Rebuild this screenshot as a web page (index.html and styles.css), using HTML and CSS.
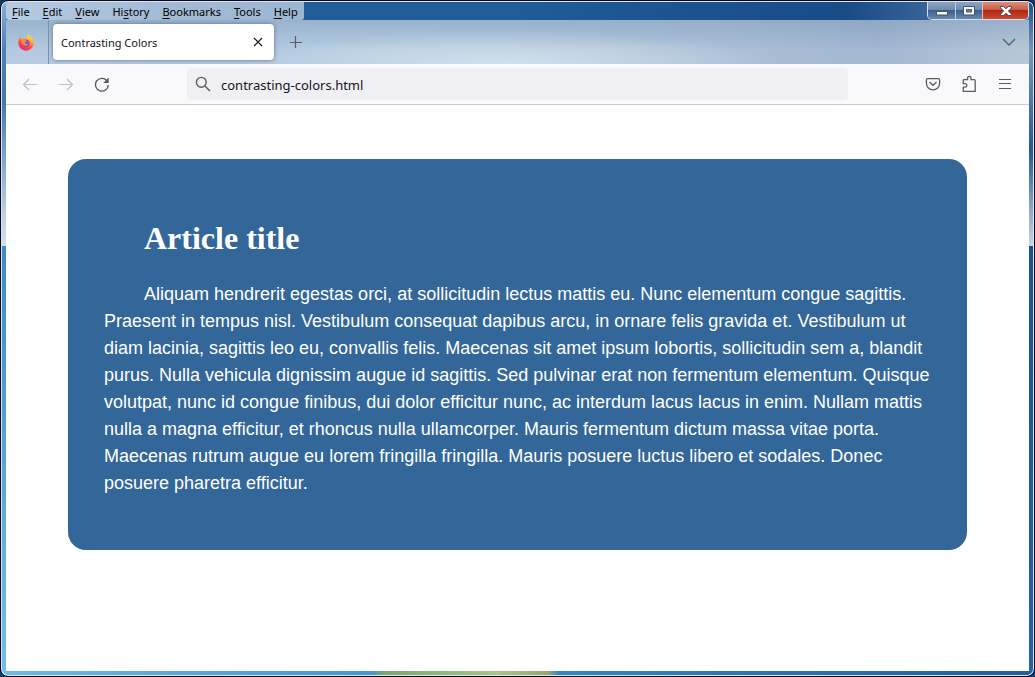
FILE: index.html
```html
<!DOCTYPE html>
<html lang="en">
<head>
<meta charset="utf-8">
<title>Contrasting Colors</title>
<link rel="stylesheet" href="styles.css">
</head>
<body>
<div class="window">
  <header class="titlebar">
    <nav class="menu" aria-label="Menu bar">
      <button type="button"><u>F</u>ile</button>
      <button type="button"><u>E</u>dit</button>
      <button type="button"><u>V</u>iew</button>
      <button type="button">Hi<u>s</u>tory</button>
      <button type="button"><u>B</u>ookmarks</button>
      <button type="button"><u>T</u>ools</button>
      <button type="button"><u>H</u>elp</button>
    </nav>
    <div class="controls">
      <button type="button" class="minimize" aria-label="Minimize"><svg width="12" height="12" viewBox="0 0 12 12"><path d="M.5 6.500h11v3.500H.5z" fill="#fff" stroke="#465469"/></svg></button>
      <button type="button" class="maximize" aria-label="Maximize"><svg width="12" height="10" viewBox="0 0 12 10"><path d="M.5.5h11v8.500H.5z" fill="#f8f8fa" stroke="#465469"/><path d="M3.500 3.500h5v2.500h-5z" fill="#6f88a7" stroke="#465469"/></svg></button>
      <button type="button" class="close" aria-label="Close"><svg width="12" height="10" viewBox="0 0 12 10"><path d="M.5.5h3.200L6 2.800 8.300.5h3.200v1.300L8.400 5l3.100 3.200v1.300H8.300L6 7.200 3.700 9.500H.5V8.200L3.600 5 .5 1.800z" fill="#fff" stroke="#584950"/></svg></button>
    </div>
  </header>
  <div class="tabs">
    <button type="button" class="pinned" aria-label="Firefox View">
      <svg width="16" height="17" viewBox="0 0 16 17">
        <defs>
          <linearGradient id="flame" x1=".8" y1="0" x2=".3" y2="1"><stop offset="0" stop-color="#fff044"/><stop offset=".35" stop-color="#ffae25"/><stop offset=".65" stop-color="#ff4b3d"/><stop offset="1" stop-color="#e5248c"/></linearGradient>
          <linearGradient id="globe" x1="1" y1="0" x2="0" y2="1"><stop offset="0" stop-color="#a44cf1"/><stop offset="1" stop-color="#4743c9"/></linearGradient>
        </defs>
        <path d="M10.500 0c.3 1.700 1.300 2.500 2.500 3.700.2-.2.2-.8.1-1.200 1.500 1.400 2.600 3.900 2.600 6.300A7.700 7.700 0 0 1 .3 9.200c0-2.500.7-4.700 2-6.100.1.700.4 1.200.8 1.600 1-.2 2-.1 2.800.3C7 4.200 8.500 3.700 9 3.400c.1-1.400.6-2.500 1.500-3.400z" fill="url(#flame)"/>
        <circle cx="8" cy="9" r="3.600" fill="url(#globe)"/>
        <path d="M3 5.500c1.500-.7 2.900-.2 3.800.8L9 6.700c-.2 1-1.300 1.100-1.900 1.500-.5.500-.1 1.600 1 1.800 1.200.2 1.600-.5 2.600-.4-.8 1.900-3.300 2.700-5.200 1.400C3.600 9.800 3.100 7.500 3 5.500z" fill="#ff9128"/>
      </svg>
    </button>
    <div class="tab">
      <span>Contrasting Colors</span>
      <button type="button" aria-label="Close tab"><svg width="10" height="10" viewBox="0 0 10 10"><path d="m1 1 8 8m0-8L1 9" stroke="#15141a" stroke-width="1.100"/></svg></button>
    </div>
    <button type="button" class="icon newtab" aria-label="New tab"><svg width="12" height="12" viewBox="0 0 12 12"><path d="M5.500 0v12M0 6.500h12" stroke="#5b5b66" stroke-width="1.200"/></svg></button>
    <button type="button" class="icon alltabs" aria-label="List all tabs"><svg width="14" height="8" viewBox="0 0 14 8"><path d="m1 1 6 6 6-6" fill="none" stroke="#5b5b66" stroke-width="1.300"/></svg></button>
  </div>
  <div class="toolbar">
    <div class="history">
      <button type="button" class="icon" aria-label="Back" disabled><svg width="16" height="16" viewBox="0 0 16 16"><path d="M15 8.500H1.500M7 3 1.500 8.500 7 14" fill="none" stroke="#bfbfc5" stroke-width="1.200"/></svg></button>
      <button type="button" class="icon" aria-label="Forward" disabled><svg width="16" height="16" viewBox="0 0 16 16"><path d="M1 8.500h13.500M9 3l5.500 5.500L9 14" fill="none" stroke="#bfbfc5" stroke-width="1.200"/></svg></button>
      <button type="button" class="icon" aria-label="Reload"><svg width="16" height="16" viewBox="0 0 16 16"><path d="M14.300 9A6.400 6.400 0 1 1 12.700 4.500" fill="none" stroke="#5b5b66" stroke-width="1.400"/><path d="M14.700 1.500V7H9.200z" fill="#5b5b66"/></svg></button>
    </div>
    <label class="address">
      <svg width="16" height="16" viewBox="0 0 16 16"><circle cx="6.300" cy="6.300" r="4.900" fill="none" stroke="#5b5b66" stroke-width="1.400"/><path d="m10 10 5 5" stroke="#5b5b66" stroke-width="1.500"/></svg>
      <input type="text" value="contrasting-colors.html" aria-label="Address">
    </label>
    <div class="actions">
      <button type="button" class="icon" aria-label="Save to Pocket"><svg width="16" height="16" viewBox="0 0 16 16"><path d="M2.700 2.600h10.600a1.300 1.300 0 0 1 1.300 1.300v3.400a6.600 6.600 0 0 1-13.200 0V3.900a1.300 1.300 0 0 1 1.300-1.300zM4.500 6 8 9.300 11.500 6" fill="none" stroke="#5b5b66" stroke-width="1.300"/></svg></button>
      <button type="button" class="icon" aria-label="Extensions"><svg width="16" height="18" viewBox="0 0 16 18"><path d="M2.300 16.300v-4.200h1.800a1.700 1.700 0 0 0 0-3.500H2.300V5.500q0-.8.8-.8h3.500V3a1.700 1.700 0 0 1 3.400 0v1.700h3.300q.9 0 .9.900v10.700z" fill="none" stroke="#5b5b66" stroke-width="1.300"/></svg></button>
      <button type="button" class="icon" aria-label="Open menu"><svg width="12" height="12" viewBox="0 0 12 12"><path d="M0 1.500h12M0 5.500h12M0 10.500h12" stroke="#5b5b66" stroke-width="1.200"/></svg></button>
    </div>
  </div>
  <main class="page">
    <article class="card">
      <h1>Article title</h1>
      <p>Aliquam hendrerit egestas orci, at sollicitudin lectus mattis eu. Nunc elementum congue sagittis. Praesent in tempus nisl. Vestibulum consequat dapibus arcu, in ornare felis gravida et. Vestibulum ut diam lacinia, sagittis leo eu, convallis felis. Maecenas sit amet ipsum lobortis, sollicitudin sem a, blandit purus. Nulla vehicula dignissim augue id sagittis. Sed pulvinar erat non fermentum elementum. Quisque volutpat, nunc id congue finibus, dui dolor efficitur nunc, ac interdum lacus lacus in enim. Nullam mattis nulla a magna efficitur, et rhoncus nulla ullamcorper. Mauris fermentum dictum massa vitae porta. Maecenas rutrum augue eu lorem fringilla fringilla. Mauris posuere luctus libero et sodales. Donec posuere pharetra efficitur.</p>
    </article>
  </main>
</div>
</body>
</html>
```
FILE: styles.css
```css
* {
  box-sizing: border-box;
}

body {
  margin: 0;
  background: #123a66;
  font: 11px "Segoe UI", "Noto Sans", sans-serif;
  color: #15141a;
}

button {
  margin: 0;
  padding: 0;
  border: 0;
  background: none;
  color: inherit;
  font: inherit;
}

svg {
  display: block;
}

.window {
  display: flex;
  flex-direction: column;
  min-height: 100vh;
  padding: 1px 5px 5px;
  border: 1px solid #04091c;
  border-radius: 8px;
  box-shadow: inset 0 0 0 1px #dbe8f4;
  background:
    linear-gradient(#8cafd0, #4d7fb4 50px, #4478ae 100px, #b9cee3 210px, #d3e1ef) left top / 50% 245px no-repeat,
    linear-gradient(#174f8c, #7797bb 50px, #4d78a8 100px, #25598f 150px, #7797bb 195px, #c9d6e4) right top / 50% 245px no-repeat,
    linear-gradient(90deg, transparent 36%, #78a870 37%, #a8c684 48%, #98a76a 53%, transparent 54%) left bottom / 100% 5px no-repeat,
    linear-gradient(#3c8bc4, #74bfe9) left bottom / 5px 430px no-repeat,
    linear-gradient(#1a5490, #2463a5) right bottom / 5px 430px no-repeat,
    linear-gradient(90deg, #6bbbe6, #3188c8 52%, #1f5fa2);
}

.titlebar {
  display: flex;
  justify-content: space-between;
  align-items: flex-start;
  height: 18px;
  background: linear-gradient(90deg, #225d99, #1f5c98 50%, #194b87 82%, #5c7fab);
}

.menu {
  display: flex;
  gap: 13px;
  height: 18px;
  padding: 0 6px;
  border-radius: 0 0 3px 3px;
  background: linear-gradient(90deg, #b5cbe2, #a3bbd5 50%, #9cb6d1);
  color: #000;
  line-height: 17px;
}

.menu u {
  text-underline-offset: 2px;
}

.controls {
  display: flex;
  height: 18px;
  border: 1px solid #d5dfeb;
  border-top: 0;
  border-radius: 0 0 5px 5px;
  overflow: hidden;
}

.controls button {
  display: grid;
  place-items: center;
  width: 27px;
  background: linear-gradient(#8ca4c1, #6f8cb0 45%, #3b608f 50%, #6788b1);
}

.controls .maximize {
  border-left: 1px solid #c0cede;
}

.controls .close {
  width: 46px;
  border-left: 1px solid #efb8aa;
  background: linear-gradient(#d9917f, #ca5c45 45%, #ae2717 50%, #cc4b2d);
}

.tabs {
  display: flex;
  align-items: center;
  height: 44px;
  background:
    radial-gradient(ellipse 260px 34px at 49% 100%, rgba(225, 235, 244, .7), transparent),
    linear-gradient(rgba(120, 150, 185, .45), transparent 70%),
    linear-gradient(90deg, #b5cae0, #b3cbe0 40%, #adc0d7 70%, #a2b7d1 85%, #b8c8d9);
}

.pinned {
  display: grid;
  place-items: center;
  align-self: stretch;
  width: 43px;
  padding-right: 3px;
  border-right: 1px solid #7f91a6;
}

.tab {
  display: flex;
  align-items: center;
  justify-content: space-between;
  width: 221px;
  height: 36px;
  margin-left: 4px;
  padding: 0 11px 0 8px;
  border-radius: 4px;
  background: #fff;
  box-shadow: 0 0 4px rgba(40, 60, 90, .6);
}

.icon {
  display: grid;
  place-items: center;
  width: 36px;
  height: 32px;
}

.newtab {
  margin-left: 4px;
}

.alltabs {
  width: 40px;
  margin-left: auto;
}

.toolbar {
  display: flex;
  align-items: center;
  justify-content: space-between;
  height: 41px;
  padding: 0 6px;
  border-bottom: 1px solid #ccccce;
  background: #f9f9fb;
}

.history,
.actions {
  display: flex;
}

.address {
  display: flex;
  align-items: center;
  gap: 10px;
  flex: 0 1 661px;
  height: 32px;
  padding: 0 8px;
  border-radius: 4px;
  background: #f0f0f4;
}

.address input {
  flex: 1;
  min-width: 0;
  padding: 1px 0 0;
  border: 0;
  background: none;
  color: inherit;
  font: 13px "Segoe UI", "Noto Sans", sans-serif;
}

.page {
  flex: 1;
  padding: 54px 62px;
  background: #fff;
}

.card {
  padding: 55px 36px 53px;
  border-radius: 18px;
  background: #336699;
  color: #fff;
  font: 18px/27px "Liberation Sans", Arial, sans-serif;
}

.card h1 {
  margin: 0 0 19px;
  font: bold 32px/48px Georgia, "Liberation Serif", serif;
  text-indent: 40px;
}

.card p {
  margin: 0;
  text-indent: 40px;
}
```
